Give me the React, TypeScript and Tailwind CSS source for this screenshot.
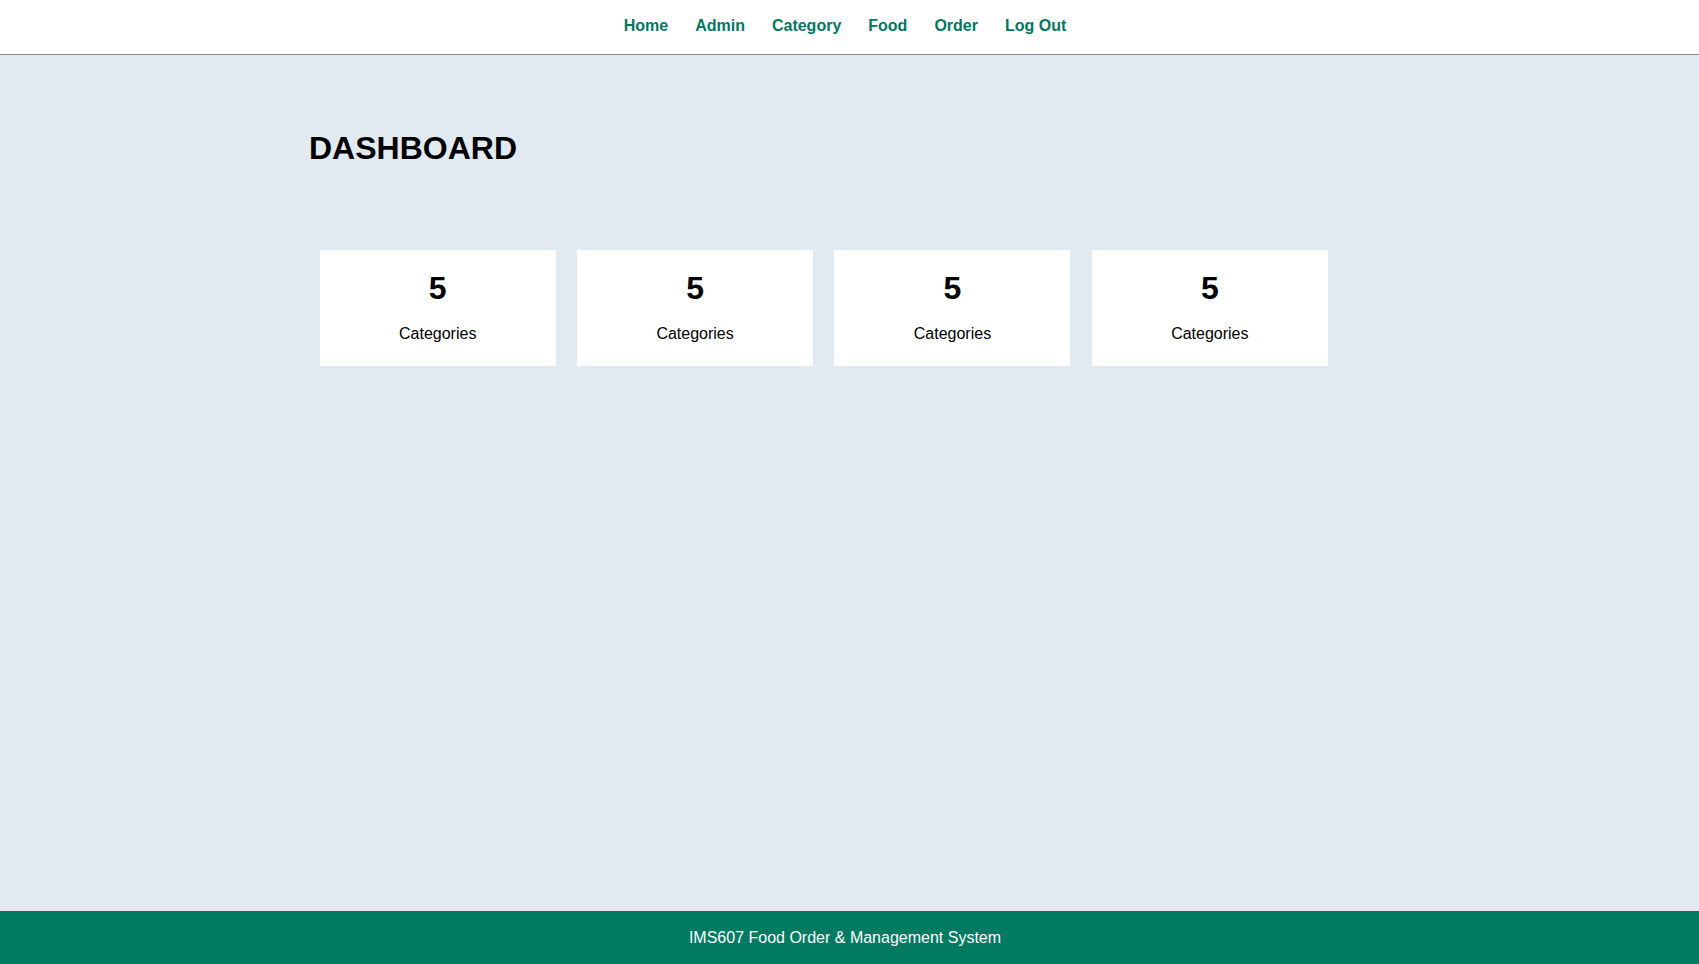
import React from "react";

const links = ["Home", "Admin", "Category", "Food", "Order", "Log Out"];

export default function App() {
  return (
    <div
      className="min-h-screen flex flex-col bg-[#e1eaf1]"
      style={{ fontFamily: '"Liberation Sans", Arial, sans-serif' }}
    >
      <header className="h-[55px] bg-white border-b border-[#8a8a8a] pr-[9px]">
        <nav className="flex justify-center gap-[27px] pt-[17px] text-[16px] leading-[18px] font-bold text-[#01785f]">
          {links.map((l) => (
            <a key={l} href="#" className="whitespace-nowrap">
              {l}
            </a>
          ))}
        </nav>
      </header>

      <main className="flex-1 pr-[9px]">
        <div className="w-[1072px] mx-auto pt-[75px]">
          <h1 className="text-[32px] leading-[37px] font-bold text-black">DASHBOARD</h1>
          <div className="flex mt-[83px]">
            {[0, 1, 2, 3].map((i) => (
              <div
                key={i}
                className="w-[236px] h-[116px] mx-[10.7px] bg-white flex flex-col items-center pt-[20px] text-black"
              >
                <div className="text-[32px] leading-[37px] font-bold">5</div>
                <div className="mt-[18px] text-[16px] leading-[18px]">Categories</div>
              </div>
            ))}
          </div>
        </div>
      </main>

      <footer className="h-[53px] bg-[#017a62] flex items-center justify-center pr-[9px] pt-[1px]">
        <span className="text-white text-[16px] leading-[18px]">
          IMS607 Food Order &amp; Management System
        </span>
      </footer>
    </div>
  );
}
